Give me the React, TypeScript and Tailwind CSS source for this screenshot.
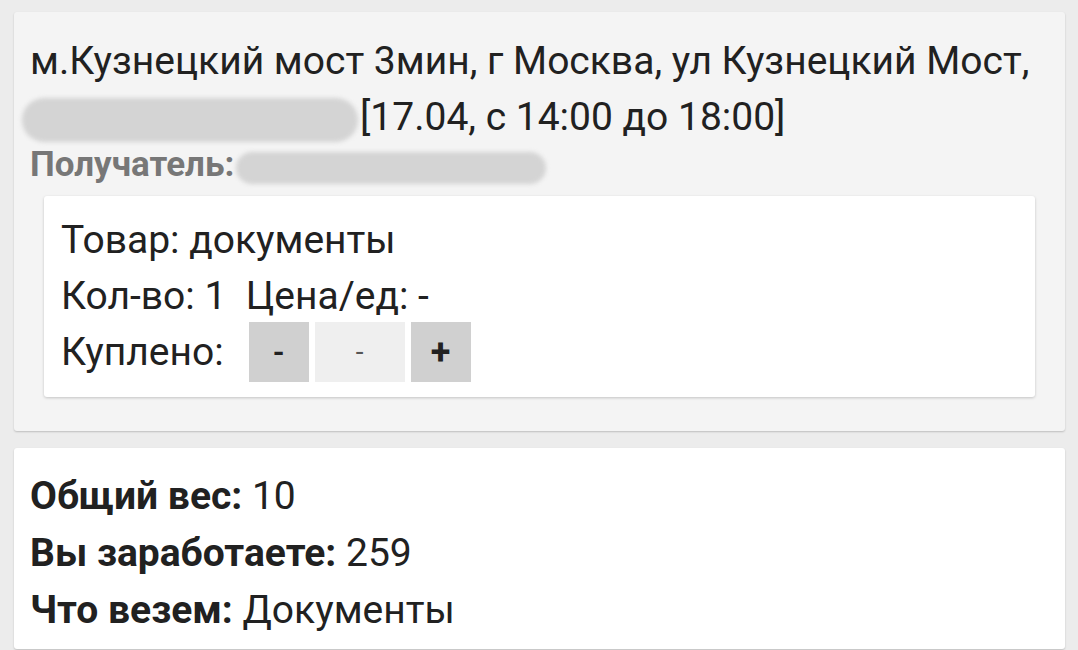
import React from 'react'

// blurred-out personal data
function Redacted({ w, h = 38 }: { w: number; h?: number }) {
  return (
    <span
      className="inline-block align-middle rounded-full bg-[#d4d4d4] blur-[2px]"
      style={{ width: w, height: h }}
    />
  )
}

export default function App() {
  return (
    <div className="min-h-[650px] bg-[#ececec] pt-3 pl-[14px] pr-[13px] text-[#212121] font-['Roboto','Noto_Sans',sans-serif]">
      {/* Order card */}
      <div className="rounded-[3px] bg-[#f4f4f4] shadow-[0_1px_2px_rgba(0,0,0,0.2)] px-4 pt-[21px] pb-[34px]">
        <div className="text-[39px] leading-[56px]">
          м.Кузнецкий мост 3мин, г Москва, ул Кузнецкий Мост,
          <br />
          <span className="-ml-2 mr-[2px]">
            <Redacted w={336} h={44} />
          </span>
          [17.04, с 14:00 до 18:00]
        </div>
        <div className="flex items-center h-[38px] text-[35px] font-bold text-[#777] leading-none">
          Получатель:
          <span className="ml-[2px] mt-1">
            <Redacted w={310} h={32} />
          </span>
        </div>

        <div className="mt-[13px] mx-[14px] rounded-[3px] bg-white shadow-[0_1px_3px_rgba(0,0,0,0.2)] pl-[17px] pt-[16px] pb-[15px] text-[39px]">
          <div className="leading-[57px]">Товар: документы</div>
          <div className="leading-[57px] -mt-[1px]">
            Кол-во: 1&nbsp;&nbsp;Цена/ед: -
          </div>
          <div className="flex items-center gap-[6px] h-[60px] -mt-[3px]">
            <span className="leading-none mr-[19px]">Куплено:</span>
            <button className="w-[60px] h-[60px] bg-[#d0d0d0] text-[30px] font-bold leading-none">
              -
            </button>
            <div className="w-[90px] h-[60px] bg-[#efefef] flex items-center justify-center text-[28px] text-[#555]">
              -
            </div>
            <button className="w-[60px] h-[60px] bg-[#d0d0d0] text-[36px] font-bold leading-none">
              +
            </button>
          </div>
        </div>
      </div>

      {/* Summary card */}
      <div className="mt-[17px] rounded-[3px] bg-white shadow-[0_1px_2px_rgba(0,0,0,0.2)] px-4 pt-[20px] pb-[10px] text-[39px] leading-[57px]">
        <div>
          <span className="font-bold">Общий вес:</span> 10
        </div>
        <div>
          <span className="font-bold">Вы заработаете:</span> 259
        </div>
        <div>
          <span className="font-bold">Что везем:</span> Документы
        </div>
      </div>
    </div>
  )
}
